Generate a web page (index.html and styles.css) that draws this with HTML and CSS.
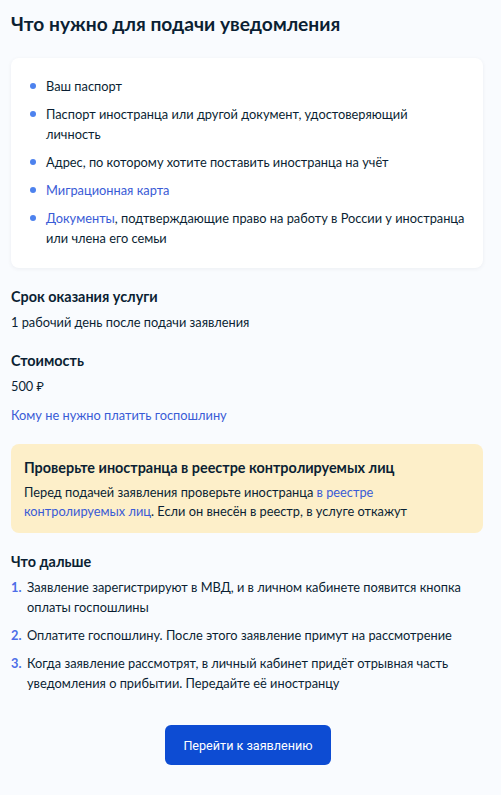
FILE: index.html
```html
<!DOCTYPE html>
<html lang="ru">
<head>
<meta charset="utf-8">
<link rel="stylesheet" href="styles.css">
</head>
<body>
<main class="page">
  <h1 class="title">Что нужно для подачи уведомления</h1>
  <div class="card">
    <ul class="bullets">
      <li>Ваш паспорт</li>
      <li>Паспорт иностранца или другой документ, удостоверяющий личность</li>
      <li>Адрес, по которому хотите поставить иностранца на учёт</li>
      <li><a class="link" href="#">Миграционная карта</a></li>
      <li><a class="link" href="#">Документы</a>, подтверждающие право на работу в России у иностранца или члена его семьи</li>
    </ul>
  </div>

  <section class="info">
    <h2 class="subtitle">Срок оказания услуги</h2>
    <p class="text">1 рабочий день после подачи заявления</p>
  </section>

  <section class="info cost">
    <h2 class="subtitle">Стоимость</h2>
    <p class="text">500 ₽</p>
    <a class="link link-block" href="#">Кому не нужно платить госпошлину</a>
  </section>

  <div class="warning">
    <h3 class="warning-title">Проверьте иностранца в реестре контролируемых лиц</h3>
    <p class="warning-text">Перед подачей заявления проверьте иностранца <a class="link" href="#">в реестре контролируемых лиц</a>. Если он внесён в реестр, в услуге откажут</p>
  </div>

  <section class="next">
    <h2 class="subtitle">Что дальше</h2>
    <ol class="steps">
      <li>Заявление зарегистрируют в МВД, и в личном кабинете появится кнопка оплаты госпошлины</li>
      <li>Оплатите госпошлину. После этого заявление примут на рассмотрение</li>
      <li>Когда заявление рассмотрят, в личный кабинет придёт отрывная часть уведомления о прибытии. Передайте её иностранцу</li>
    </ol>
  </section>

  <div class="actions">
    <button class="btn" type="button">Перейти к заявлению</button>
  </div>
</main>
</body>
</html>
```

FILE: styles.css
```css
* { box-sizing: border-box; }
html, body { margin: 0; padding: 0; }
body {
  background: #f9fbfe;
  font-family: Lato, "Noto Sans", sans-serif;
  color: #0b1f33;
  font-size: 12.8px;
  line-height: 20px;
}
.page {
  padding: 11px 18px 0 11px;
  width: 501px;
}
.title {
  margin: 0;
  font-size: 19.2px;
  line-height: 26px;
  font-weight: 700;
}
.card {
  margin-top: 21px;
  background: #ffffff;
  border-radius: 8px;
  box-shadow: 0 1px 4px rgba(11, 31, 51, 0.06);
  padding: 18px 18px 20px 19px;
}
.bullets {
  list-style: none;
  margin: 0;
  padding: 0;
  display: flex;
  flex-direction: column;
  gap: 8px;
}
.bullets li {
  position: relative;
  padding-left: 16px;
}
.bullets li::before {
  content: "";
  position: absolute;
  left: 0;
  top: 7px;
  width: 6px;
  height: 6px;
  border-radius: 50%;
  background: #4d82ee;
}
.link {
  color: #3a5bd6;
  text-decoration: none;
}
.info { margin-top: 19px; }
.subtitle {
  margin: 0;
  font-size: 14.4px;
  line-height: 20px;
  font-weight: 700;
}
.text {
  margin: 5px 0 0;
}
.link-block {
  display: block;
  margin-top: 9px;
}
.warning {
  margin-top: 19px;
  background: #fdefc9;
  border-radius: 8px;
  padding: 14px 20px 12px 13px;
}
.warning-title {
  margin: 0;
  font-size: 14.4px;
  line-height: 20px;
  font-weight: 700;
}
.warning-text {
  margin: 5px 0 0;
  line-height: 19px;
}
.next { margin-top: 19px; }
.steps {
  margin: 5px 0 0;
  padding: 0;
  list-style: none;
  counter-reset: step;
  display: flex;
  flex-direction: column;
  gap: 8px;
}
.steps li {
  counter-increment: step;
  position: relative;
  padding-left: 16px;
}
.steps li::before {
  content: counter(step) ".";
  position: absolute;
  left: 0;
  top: 0;
  color: #4d6ee8;
  font-weight: 700;
}
.actions {
  display: flex;
  justify-content: center;
  padding: 32px 0 30px;
  padding-left: 2px;
}
.btn {
  background: #0d4cd3;
  color: #ffffff;
  border: none;
  border-radius: 6px;
  height: 40px;
  padding: 0 18px;
  font-family: Roboto, Lato, sans-serif;
  font-size: 12.6px;
  cursor: pointer;
}
```
